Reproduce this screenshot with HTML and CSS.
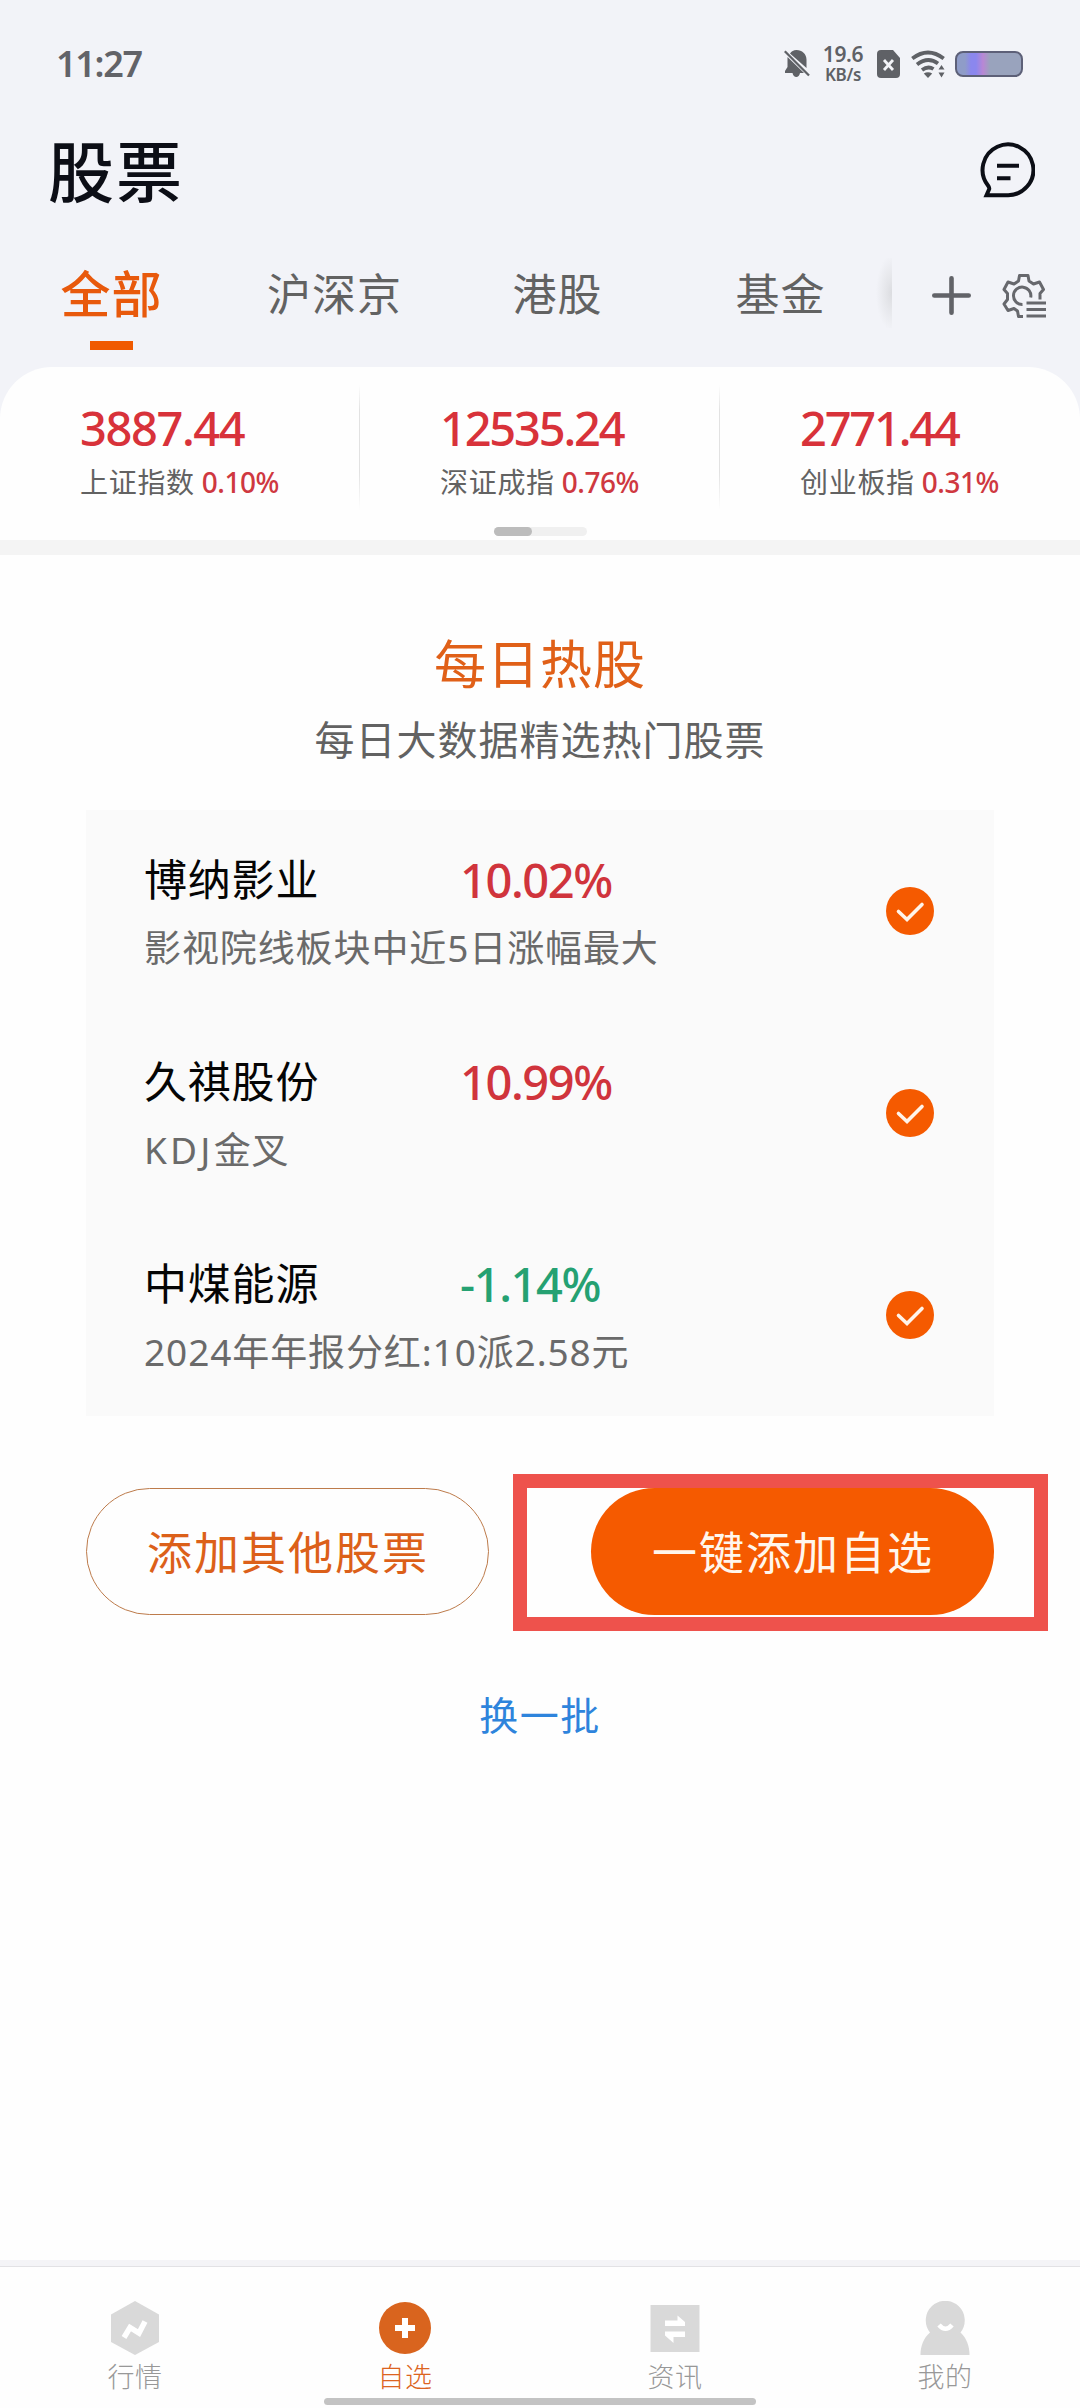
FILE: index.html
```html
<!DOCTYPE html>
<html lang="zh-CN">
<head>
<meta charset="utf-8">
<title>股票</title>
<link rel="stylesheet" href="styles.css">
</head>
<body>
<div class="screen">
  <header class="top">
    <div class="status">
      <span class="clock">11:27</span>
      <div class="status-icons">
        <svg class="i-bell" width="26" height="30" viewBox="0 0 26 30" fill="#5f6166"><path d="M6 4.5C7.500 2.500 9.500 1 12.500 1c5.500 0 10 4 10 9.500V19L6 4.500zM3.500 8L20 24H16c-.5 2.500-2 4-3.700 4S9 26.500 8.500 24H1v-2l2.500-4z"/><path d="M.8 2.200L25 26.500" stroke="#5f6166" stroke-width="2.300"/></svg>
        <div class="speed"><span class="speed-n">19.6</span><span class="speed-u">KB/s</span></div>
        <svg class="i-sim" width="23" height="28" viewBox="0 0 23 28"><path d="M4 0h12l7 8v16a4 4 0 0 1-4 4H4a4 4 0 0 1-4-4V4a4 4 0 0 1 4-4z" fill="#5f6166"/><path d="M7 10l9 10M16 10L7 20" stroke="#f2f3f8" stroke-width="2.800"/></svg>
        <svg class="i-wifi" width="35" height="28" viewBox="0 0 35 28"><g fill="none" stroke="#5f6166" stroke-width="3.800"><path d="M1.300 8.500Q17 -3.500 32.700 8.500"/><path d="M6 14.500Q17 6 27 13.500"/><path d="M11 20Q17 15.500 22.500 19"/></g><path d="M12.800 23.500Q17 21 21.200 23.500L17 28z" fill="#5f6166"/><path d="M27.500 19.500L30.500 15l3 4.500zM27.500 22.500L30.500 27.500l3-5z" fill="#5f6166"/></svg>
        <span class="battery"></span>
      </div>
    </div>
    <div class="title-row">
      <h1>股票</h1>
      <svg width="56" height="56" viewBox="0 0 56 56" fill="none" stroke="#0c0e16" stroke-width="4"><path d="M28 53.200H7.500L10 47.500C10.800 46 10 44.800 9 43.500A25.400 25.400 0 1 1 28 53.200z"/><path d="M18 23.700h22M18 36.200h13.500"/></svg>
    </div>
    <div class="tab-row">
      <nav class="tabs">
        <a class="tab active">全部</a><a class="tab">沪深京</a><a class="tab">港股</a><a class="tab">基金</a>
      </nav>
      <div class="tools">
        <svg width="39" height="39" viewBox="0 0 39 39" stroke="#626368" stroke-width="4.600" stroke-linecap="round"><path d="M2.300 19.500h34.400M19.500 2.300v34.400"/></svg>
        <svg width="46" height="46" viewBox="0 0 46 46" fill="none" stroke="#67686d" stroke-width="3"><path d="M22 43.500h-4.500l-1-5.500-3.500-2.500-6 2L3 31l3.500-4.500v-6L3 16.500l4-7.500 6 2 4.500-3 1-5.500h8.500l1 5.500 4.500 3 6-2 4 7.500-3.500 4v6" stroke-linejoin="round"/><path d="M21.500 31.500a8.700 8.700 0 1 1 8.200-7" /><path d="M25.500 30h19.500M25.500 36.500h19.500M25.500 43h19.500"/></svg>
      </div>
    </div>
  </header>
  <section class="indices">
    <div class="index"><b>3887.44</b><p>上证指数 <em>0.10%</em></p></div>
    <div class="index"><b class="tight">12535.24</b><p>深证成指 <em>0.76%</em></p></div>
    <div class="index"><b class="tight">2771.44</b><p>创业板指 <em>0.31%</em></p></div>
    <div class="pager"><i></i></div>
  </section>
  <main>
    <h2>每日热股</h2>
    <p class="lead">每日大数据精选热门股票</p>
    <div class="stocks">
      <div class="stock"><div class="info"><div class="line"><span class="name">博纳影业</span><span class="pct">10.02%</span></div><p class="desc">影视院线板块中近5日涨幅最大</p></div>
        <svg class="check" width="48" height="48" viewBox="0 0 48 48"><circle cx="24" cy="24" r="24" fill="#f55a00"/><path d="M12.500 24.500l8.500 8L36 17.500" fill="none" stroke="#fff4ea" stroke-width="3.600" stroke-linecap="round"/></svg></div>
      <div class="stock"><div class="info"><div class="line"><span class="name">久祺股份</span><span class="pct">10.99%</span></div><p class="desc"><span class="latin">KDJ</span>金叉</p></div>
        <svg class="check" width="48" height="48" viewBox="0 0 48 48"><circle cx="24" cy="24" r="24" fill="#f55a00"/><path d="M12.500 24.500l8.500 8L36 17.500" fill="none" stroke="#fff4ea" stroke-width="3.600" stroke-linecap="round"/></svg></div>
      <div class="stock"><div class="info"><div class="line"><span class="name">中煤能源</span><span class="pct down">-1.14%</span></div><p class="desc">2024年年报分红:10派2.58元</p></div>
        <svg class="check" width="48" height="48" viewBox="0 0 48 48"><circle cx="24" cy="24" r="24" fill="#f55a00"/><path d="M12.500 24.500l8.500 8L36 17.500" fill="none" stroke="#fff4ea" stroke-width="3.600" stroke-linecap="round"/></svg></div>
    </div>
    <div class="actions">
      <a class="btn outline">添加其他股票</a>
      <div class="focus"><a class="btn solid">一键添加自选</a><span class="frame"></span></div>
    </div>
    <a class="swap">换一批</a>
  </main>
  <footer>
    <a class="nav"><svg width="52" height="54" viewBox="0 0 52 54"><path d="M26 0l24 13.500v27.500L26 54 2 41V13.500z" fill="#d9d9d9"/><path d="M15 36.500l6-10 9 5.500 6-11.500" fill="none" stroke="#fff" stroke-width="5.500"/></svg><span>行情</span></a>
    <a class="nav on"><svg width="52" height="54" viewBox="0 0 52 54"><circle cx="26" cy="27" r="26" fill="#d9641e"/><path d="M26 17v20M16 27h20" stroke="#fff" stroke-width="6"/></svg><span>自选</span></a>
    <a class="nav"><svg width="52" height="54" viewBox="0 0 52 54"><path d="M1.500 4h49v47h-49z" fill="#d9d9d9"/><path d="M16 19.500h12.500v-5L36 21v4H16zM16 30.500h20v5.500H24.500v6L16 34.500z" fill="#fff"/></svg><span>资讯</span></a>
    <a class="nav"><svg width="52" height="54" viewBox="0 0 52 54"><path d="M1.500 54c0-9 3-17 9.500-22.500A19.500 19.500 0 1 1 41.500 31.500C47.500 37 50.500 45 50.500 54z" fill="#d9d9d9"/><path d="M20 24q6.500 7.500 13 0" fill="none" stroke="#fff" stroke-width="4.500"/></svg><span>我的</span></a>
    <span class="home"></span>
  </footer>
</div>
</body>
</html>
```
FILE: styles.css
```css
* { box-sizing: border-box; margin: 0; padding: 0; }
body { font-family: "Noto Sans", "Noto Sans CJK SC", sans-serif; background: #fefefe; color: #626262; }
svg { display: block; flex: none; }
.screen { width: 1080px; height: 2408px; display: flex; flex-direction: column; overflow: hidden; }

.top { background: #f2f3f8; height: 417px; flex: none; }
.status { height: 128px; padding: 0 57px 0 56px; display: flex; align-items: center; justify-content: space-between; }
.clock { font-size: 36px; line-height: 40px; font-weight: 600; color: #626368; letter-spacing: -1.3px; }
.status-icons { display: flex; align-items: center; }
.speed { display: flex; flex-direction: column; align-items: center; width: 44px; margin: 0 12px 0 11px; color: #5f6166; font-weight: 600; }
.speed-n { font-size: 21px; line-height: 21px; letter-spacing: -.3px; }
.speed-u { font-size: 17px; line-height: 20px; letter-spacing: -.3px; }
.i-wifi { margin: 0 9px 0 11px; }
.battery { width: 68px; height: 26px; border: 2.500px solid #5d6078; border-radius: 8px; background: linear-gradient(90deg, #8f9cc8 0 8px, #8b87ee 14px 19px, #b987d4 26px, #99a3bd 33px); }

.title-row { height: 90px; padding: 0 45px 0 48px; display: flex; align-items: center; justify-content: space-between; }
.title-row svg { margin-bottom: 7px; }
h1 { font-size: 66px; line-height: 80px; font-weight: 500; color: #0c0e16; letter-spacing: 2px; margin-bottom: 4px; }
.tab-row { display: flex; height: 149px; }
.tabs { width: 892px; display: flex; background: radial-gradient(ellipse 16px 38px at 100% 50%, #dbdce0, #e4e5e9 35%, #f2f3f800) no-repeat right 40px / 16px 70px; }
.tab { flex: 1; display: flex; flex-direction: column; align-items: center; padding-top: 40px; font-size: 44px; line-height: 72px; letter-spacing: 1px; }
.tab.active { color: #e8590c; font-size: 50px; font-weight: 500; }
.tab.active::after { content: ""; width: 43px; height: 9px; background: #f05a00; margin-top: 11px; }
.tools { display: flex; align-items: center; gap: 30px; padding: 0 0 0 40px; height: 155px; }

.indices { height: 188px; margin-top: -50px; flex: none; background: #fefefe; border-radius: 52px 52px 0 0; border-bottom: 15px solid #f4f4f4; display: grid; grid-template-columns: repeat(3, 360px); position: relative; }
.index { padding: 34px 0 0 80px; background: linear-gradient(#fff0, #e2e2e2 20%, #e2e2e2 70%, #fff0) no-repeat right 18px / 1px 125px; }
.index:nth-child(3) { background: none; padding-left: 80px; }
.index b { display: block; font-size: 47px; line-height: 54px; font-weight: 500; color: #d8323a; letter-spacing: -1.400px; }
.index .tight { letter-spacing: -2.200px; }
.index p { font-size: 28px; line-height: 40px; margin-top: 7px; letter-spacing: .7px; white-space: nowrap; }
.index em { font-style: normal; font-weight: 500; color: #cf3840; letter-spacing: -.5px; margin-left: -1px; }
.pager { position: absolute; left: 494px; bottom: 4px; width: 93px; height: 9px; border-radius: 5px; background: #f0f0f0; }
.pager i { display: block; width: 38px; height: 9px; border-radius: 5px; background: #bcbcbc; }

main { flex: 1; display: flex; flex-direction: column; align-items: center; }
h2 { margin-top: 74px; font-size: 52px; line-height: 70px; font-weight: 400; color: #e06018; letter-spacing: 1px; }
.lead { margin-top: 13px; font-size: 40px; line-height: 56px; letter-spacing: 1px; }
.stocks { width: 908px; margin-top: 42px; background: #fafafa; }
.stock { height: 202px; padding: 0 60px 0 58px; display: flex; align-items: center; justify-content: space-between; }
.info { height: 202px; padding-top: 42px; }
.line { display: flex; font-size: 43px; line-height: 56px; color: #050505; }
.name { width: 316px; letter-spacing: .8px; }
.pct { font-size: 47px; font-weight: 500; color: #d0343c; letter-spacing: -1.400px; }
.pct.down { color: #25a172; }
.desc { font-size: 37px; line-height: 50px; margin-top: 15px; letter-spacing: .9px; color: #6a6a6a; }
.latin { letter-spacing: 3.200px; }
.actions { width: 908px; margin-top: 72px; display: flex; justify-content: space-between; }
.btn { width: 403px; height: 127px; border-radius: 64px; display: flex; align-items: center; justify-content: center; font-size: 45px; letter-spacing: 2px; padding: 0 0 3px 1px; }
.outline { border: 1.500px solid #bd7b4b; color: #dc6019; }
.solid { background: #f55a00; color: #fff6ec; }
.focus { position: relative; }
.frame { position: absolute; left: -78px; top: -14px; width: 535px; height: 157px; border: 14px solid #ee524c; }
.swap { margin-top: 71px; font-size: 39px; line-height: 58px; color: #2e84dc; letter-spacing: 1.500px; }

footer { height: 148px; flex: none; border-top: 6px solid #f4f4f7; display: grid; grid-template-columns: repeat(4, 270px); position: relative; box-shadow: inset 0 1px #e2e2e5; }
.nav { display: flex; flex-direction: column; align-items: center; padding-top: 35px; font-size: 27px; line-height: 40px; color: #989898; letter-spacing: .5px; font-weight: 300; }
.nav span { margin-top: 2px; }
.nav.on { color: #dc6420; }
.home { position: absolute; left: 324px; bottom: 3px; width: 432px; height: 7px; border-radius: 4px; background: #c3c3c3; }
```
